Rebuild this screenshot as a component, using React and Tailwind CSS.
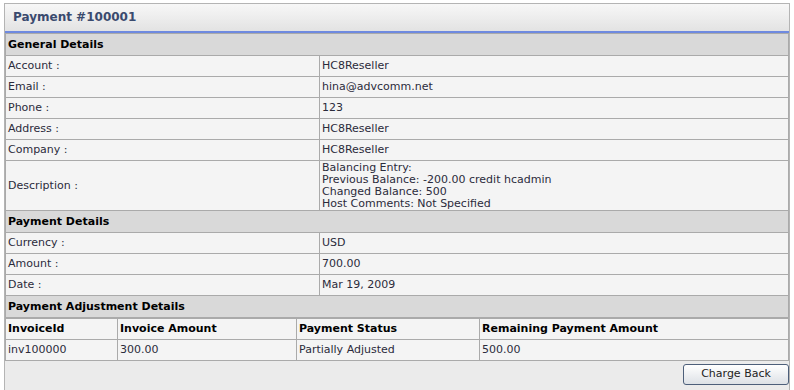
const general = [
  ["Account :", "HC8Reseller"],
  ["Email :", "hina@advcomm.net"],
  ["Phone :", "123"],
  ["Address :", "HC8Reseller"],
  ["Company :", "HC8Reseller"],
];

const description = [
  "Balancing Entry:",
  "Previous Balance: -200.00 credit hcadmin",
  "Changed Balance: 500",
  "Host Comments: Not Specified",
];

const payment = [
  ["Currency :", "USD"],
  ["Amount :", "700.00"],
  ["Date :", "Mar 19, 2009"],
];

function SectionRow({ title }) {
  return (
    <tr className="h-[22px] bg-[#d9d9d9]">
      <td colSpan={2} className="border border-[#aaaaaa] px-[2px] font-bold text-black">
        {title}
      </td>
    </tr>
  );
}

function InfoRow({ label, children, tall }) {
  return (
    <tr className={tall ? "h-[50px]" : "h-[21px]"}>
      <td className="w-[314px] border border-[#aaaaaa] px-[2px] align-middle">{label}</td>
      <td className="border border-[#aaaaaa] px-[2px] align-middle">{children}</td>
    </tr>
  );
}

export default function App() {
  return (
    <div className="w-[794px] h-[390px] bg-white text-[11px] text-[#2b2b3b] font-['DejaVu_Sans',Verdana,sans-serif] pt-[3px] pl-[4px] overflow-hidden">
      <div className="w-[786px] border border-[#b4b4b4] bg-[#ebebeb]">
        {/* header */}
        <div className="h-[29px] bg-gradient-to-b from-[#f7f7f7] to-[#e3e3e3] flex items-center pl-[8px] pb-[1px] border-b-2 border-[#6f8ae0]">
          <span className="text-[12px] font-bold text-[#3a4a6e]">Payment #100001</span>
        </div>

        <table className="w-full border-collapse bg-[#f4f4f4] leading-[12px]">
          <tbody>
            <SectionRow title="General Details" />
            {general.map(([l, v]) => (
              <InfoRow key={l} label={l}>{v}</InfoRow>
            ))}
            <InfoRow label="Description :" tall>
              {description.map((d) => (
                <div key={d}>{d}</div>
              ))}
            </InfoRow>
            <SectionRow title="Payment Details" />
            {payment.map(([l, v]) => (
              <InfoRow key={l} label={l}>{v}</InfoRow>
            ))}
            <SectionRow title="Payment Adjustment Details" />
          </tbody>
        </table>

        <table className="w-full border-collapse bg-[#f4f4f4] leading-[12px]">
          <tbody>
            <tr className="h-[21px] font-bold text-black">
              <td className="w-[112px] border border-[#aaaaaa] px-[2px]">InvoiceId</td>
              <td className="w-[179px] border border-[#aaaaaa] px-[2px]">Invoice Amount</td>
              <td className="w-[183px] border border-[#aaaaaa] px-[2px]">Payment Status</td>
              <td className="border border-[#aaaaaa] px-[2px]">Remaining Payment Amount</td>
            </tr>
            <tr className="h-[21px]">
              <td className="border border-[#aaaaaa] px-[2px]">inv100000</td>
              <td className="border border-[#aaaaaa] px-[2px]">300.00</td>
              <td className="border border-[#aaaaaa] px-[2px]">Partially Adjusted</td>
              <td className="border border-[#aaaaaa] px-[2px]">500.00</td>
            </tr>
          </tbody>
        </table>

        <div className="flex justify-end pt-[3px] pb-[8px]">
          <button className="w-[106px] h-[21px] rounded-[3px] border border-[#4d5f7a] bg-gradient-to-b from-[#ffffff] to-[#dde1e6] text-[11px] text-[#222]">
            Charge Back
          </button>
        </div>
      </div>
    </div>
  );
}
